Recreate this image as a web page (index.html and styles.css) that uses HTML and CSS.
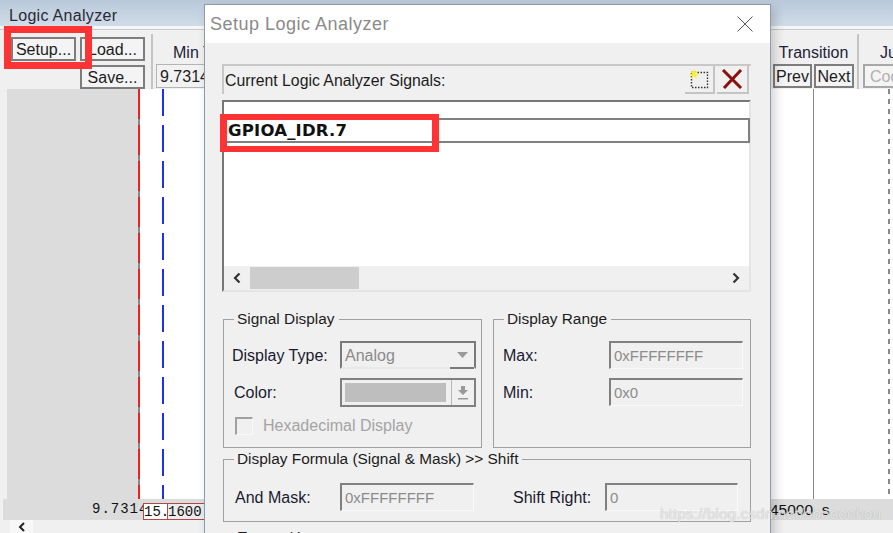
FILE: index.html
```html
<!DOCTYPE html>
<html>
<head>
    <title>Logic Analyzer</title>
    <link rel="stylesheet" href="styles.css">
</head>
<body>
    <div class="analyzer">
        <div class="analyzer-title">Logic Analyzer</div>
        <div class="toolbar">
            <div class="tool-col setup-col">
                <button class="btn btn-wide">Setup...</button>
            </div>
            <div class="tool-col load-col">
                <button class="btn btn-wide">Load...</button>
                <button class="btn btn-wide">Save...</button>
            </div>
            <div class="tool-sep"></div>
            <div class="tool-col min-col">
                <div class="tool-label min-label">Min Time</div>
                <div class="tool-value">9.731450</div>
            </div>
            <div class="tool-spacer"></div>
            <div class="tool-col">
                <div class="tool-label">Transition</div>
                <div class="tool-pair">
                    <button class="btn btn-prev">Prev</button>
                    <button class="btn btn-next">Next</button>
                </div>
            </div>
            <div class="tool-sep sep-right"></div>
            <div class="tool-col jump-col">
                <div class="tool-label">Jump</div>
                <button class="btn btn-code">Code</button>
            </div>
        </div>
        <div class="chart">
            <div class="chart-names"></div>
            <div class="chart-plot">
                <div class="cursor cursor-red"></div>
                <div class="cursor cursor-blue"></div>
                <div class="cursor cursor-grid"></div>
                <div class="cursor cursor-dash"></div>
            </div>
        </div>
        <div class="timebar">
            <span class="time-start">9.7314</span>
            <span class="time-box time-box-a">15.</span>
            <span class="time-box time-box-b">1600</span>
            <span class="time-end">45000  s</span>
        </div>
        <div class="hscroll">
            <span class="hscroll-btn">
                <svg width="8" height="10" viewBox="0 0 8 10"><path d="M6 1 L2 5 L6 9" fill="none" stroke="#222" stroke-width="2"/></svg>
            </span>
        </div>
    </div>

    <div class="dialog">
        <div class="dialog-title">
            <span>Setup Logic Analyzer</span>
            <svg class="dialog-close" width="16" height="16" viewBox="0 0 16 16"><path d="M0.5 0.5 L15.5 15.5 M15.5 0.5 L0.5 15.5" stroke="#555" stroke-width="1" fill="none"/></svg>
        </div>
        <div class="dialog-body">
            <div class="signals-head">
                <span class="signals-label">Current Logic Analyzer Signals:</span>
                <button class="icon-btn">
                    <svg width="22" height="22" viewBox="0 0 22 22">
                        <rect x="3.500" y="4.500" width="16" height="15" fill="none" stroke="#333" stroke-width="1.400" stroke-dasharray="1.500 1.500"/>
                        <path d="M6 0.500 L7 4 L10.500 2.500 L8 5.500 L11.500 7 L8 7.500 L9 11 L6 8.500 L3 11 L4 7.500 L0.500 7 L4 5.500 L1.500 2.500 L5 4 Z" fill="#f8f040"/>
                    </svg>
                </button>
                <button class="icon-btn icon-del">
                    <svg width="22" height="20" viewBox="0 0 22 20"><path d="M2 1 L20 19 M20 1 L3 19" stroke="#8b1010" stroke-width="3" fill="none"/></svg>
                </button>
            </div>
            <div class="signals-list">
                <div class="signals-rows">
                    <div class="signal-row">GPIOA_IDR.7</div>
                </div>
                <div class="list-scroll">
                    <svg width="10" height="12" viewBox="0 0 10 12"><path d="M7.500 1.500 L3 6 L7.500 10.500" fill="none" stroke="#333" stroke-width="2.200"/></svg>
                    <span class="list-thumb"></span>
                    <svg class="list-right" width="10" height="12" viewBox="0 0 10 12"><path d="M2.500 1.500 L7 6 L2.500 10.500" fill="none" stroke="#333" stroke-width="2.200"/></svg>
                </div>
            </div>

            <div class="group-row">
                <fieldset class="group group-display">
                    <legend>Signal Display</legend>
                    <div class="field">
                        <label>Display Type:</label>
                        <div class="combo">
                            <span class="combo-text">Analog</span>
                            <span class="combo-arrow"><svg width="11" height="6" viewBox="0 0 11 6"><path d="M0 0 H11 L5.500 6 Z" fill="#9a9a9a"/></svg></span>
                        </div>
                    </div>
                    <div class="field">
                        <label class="color-label">Color:</label>
                        <div class="color-combo">
                            <span class="color-swatch"></span>
                            <span class="color-arrow"><svg width="12" height="15" viewBox="0 0 12 15"><path d="M4 1 H8 V5 H11 L6 10 L1 5 H4 Z M1 13 H11 V14.500 H1 Z" fill="#999"/></svg></span>
                        </div>
                    </div>
                    <div class="check">
                        <span class="check-box"></span>
                        <span>Hexadecimal Display</span>
                    </div>
                </fieldset>
                <fieldset class="group group-range">
                    <legend>Display Range</legend>
                    <div class="field">
                        <label class="range-label">Max:</label>
                        <div class="input">0xFFFFFFFF</div>
                    </div>
                    <div class="field">
                        <label class="range-label">Min:</label>
                        <div class="input">0x0</div>
                    </div>
                </fieldset>
            </div>

            <fieldset class="group group-formula">
                <legend>Display Formula (Signal &amp; Mask) &gt;&gt; Shift</legend>
                <div class="field field-formula">
                    <label class="mask-label">And Mask:</label>
                    <div class="input">0xFFFFFFFF</div>
                    <label class="shift-label">Shift Right:</label>
                    <div class="input input-shift">0</div>
                </div>
            </fieldset>

            <div class="export-label">Export / Import</div>
        </div>
    </div>

    <div class="mark mark-setup"></div>
    <div class="mark mark-signal"></div>
    <div class="watermark">https://blog.csdn.net/oooooohou</div>
</body>
</html>
```

FILE: styles.css
```css
html, body {
    margin: 0;
    height: 533px;
    overflow: hidden;
}
body {
    position: relative;
    background: #f0f0f0;
    color: #1c1c1c;
    font-family: "Liberation Sans", Arial, sans-serif;
    font-size: 16px;
}
button {
    font: inherit;
    color: inherit;
    padding: 0;
}

/* analyzer window behind the dialog */
.analyzer {
    height: 533px;
    display: flex;
    flex-direction: column;
}
.analyzer-title {
    height: 26px;
    line-height: 31px;
    padding-left: 9px;
    letter-spacing: 0.3px;
    color: #2a2a35;
    background: linear-gradient(#b9c9da, #d0dce8);
    border-bottom: 3px solid #f4f6f8;
}
.toolbar {
    height: 60px;
    display: flex;
    box-sizing: border-box;
    border-top: 1px solid #c8c8c8;
    padding: 7px 0 0 11px;
    background: #f0f0f0;
}
.tool-col {
    display: flex;
    flex-direction: column;
    align-items: center;
    gap: 4px;
}
.setup-col { margin-right: 4px; }
.load-col { margin-right: 6px; }
.tool-sep {
    width: 2px;
    height: 56px;
    margin-top: -3px;
    background: #c4c4c4;
}
.min-col {
    width: 92px;
    margin-left: 3px;
    align-items: flex-start;
}
.tool-label {
    height: 23px;
    line-height: 32px;
    white-space: nowrap;
    color: #222238;
}
.min-label { padding-left: 17px; }
.tool-value {
    width: 100%;
    height: 24px;
    line-height: 23px;
    box-sizing: border-box;
    padding-left: 3px;
    border: 1px solid #b4b4b4;
    background: #f2f2f2;
    white-space: nowrap;
}
.tool-spacer { flex: 1; }
.tool-pair {
    display: flex;
    gap: 2px;
}
.btn {
    height: 24px;
    box-sizing: border-box;
    border: 2px solid #7d7d7d;
    background: #f4f4f4;
    line-height: 21px;
    text-align: center;
}
.btn-wide { width: 65px; }
.btn-prev { width: 39px; }
.btn-next { width: 40px; }
.sep-right { margin-left: 3px; }
.jump-col {
    width: 30px;
    margin-left: 4px;
    align-items: flex-start;
}
.jump-col .tool-label { padding-left: 17px; }
.btn-code {
    width: 60px;
    flex: none;
    border-color: #a8a8a8;
    color: #b0b0b0;
    text-align: left;
    padding-left: 5px;
}
.chart {
    flex: 1;
    display: flex;
    margin-left: 7px;
    background: #fff;
}
.chart-names {
    width: 131px;
    background: #dcdcdc;
}
.chart-plot {
    flex: 1;
    position: relative;
}
.cursor {
    position: absolute;
    top: 0;
    bottom: 0;
}
.cursor-red {
    left: 0;
    width: 2px;
    background: repeating-linear-gradient(#f02020 0 30px, #888 30px 36px);
}
.cursor-blue {
    left: 24px;
    width: 2px;
    background: repeating-linear-gradient(#2030e8 0 27px, #fff 27px 36px);
}
.cursor-grid {
    left: 675px;
    width: 1px;
    background: #888;
}
.cursor-dash {
    left: 750px;
    width: 2px;
    background: repeating-linear-gradient(#888 0 5px, #fff 5px 10px);
}
.timebar {
    height: 21px;
    flex: none;
    position: relative;
    margin-left: 3px;
    background: #dcdcdc;
    font-family: "Liberation Mono", monospace;
    font-size: 14px;
    color: #111;
}
.time-start {
    position: absolute;
    left: 89px;
    top: 2px;
    letter-spacing: 1px;
}
.time-box {
    position: absolute;
    top: 4px;
    height: 17px;
    line-height: 17px;
    box-sizing: border-box;
    background: #fff;
    border: 1px solid #b04848;
    white-space: nowrap;
}
.time-box-a {
    left: 140px;
    width: 25px;
}
.time-box-b {
    left: 164px;
    width: 50px;
    background: #ececec;
}
.time-end {
    position: absolute;
    left: 767px;
    top: 2px;
    font-family: "Liberation Sans", Arial, sans-serif;
    font-size: 15.500px;
    white-space: pre;
}
.hscroll {
    height: 13px;
    flex: none;
    padding-left: 10px;
    background: #f0f0f0;
}
.hscroll-btn {
    display: flex;
    align-items: center;
    justify-content: center;
    width: 23px;
    height: 13px;
    background: #f8f8f8;
}

/* dialog */
.dialog {
    position: absolute;
    left: 204px;
    top: 4px;
    width: 567px;
    height: 540px;
    box-sizing: border-box;
    border: 1px solid #8e9aa6;
    background: #f0f0f0;
    box-shadow: 4px 4px 10px rgba(0, 0, 0, 0.18);
}
.dialog-title {
    height: 38px;
    display: flex;
    align-items: center;
    justify-content: space-between;
    padding: 0 17px 0 5px;
    background: #fff;
    font-size: 18px;
    letter-spacing: 0.5px;
    color: #8a8a8a;
}
.dialog-body {
    padding: 21px 19px 0 17px;
    display: flex;
    flex-direction: column;
}
.signals-head {
    height: 30px;
    display: flex;
    align-items: center;
    box-sizing: border-box;
    border-top: 2px solid #c8c8c8;
    border-left: 2px solid #c8c8c8;
    padding: 0 2px 0 1px;
}
.signals-label {
    flex: 1;
    font-size: 15.800px;
    padding-top: 2px;
}
.icon-btn {
    width: 30px;
    height: 28px;
    margin-left: 2px;
    display: flex;
    align-items: center;
    justify-content: center;
    border: none;
    border-right: 2px solid #c4c4c4;
    border-bottom: 2px solid #c4c4c4;
    background: #f0f0f0;
}
.icon-del { width: 32px; }
.signals-list {
    height: 192px;
    margin-top: 6px;
    display: flex;
    flex-direction: column;
    box-sizing: border-box;
    border-top: 2px solid #777;
    border-left: 2px solid #777;
    border-right: 2px solid #e4e4e4;
    border-bottom: 2px solid #e4e4e4;
    background: #fff;
}
.signals-rows {
    flex: 1;
    padding-top: 16px;
}
.signal-row {
    height: 25px;
    line-height: 21px;
    box-sizing: border-box;
    border: 2px solid #808080;
    padding-left: 2px;
    font-family: "DejaVu Sans", sans-serif;
    font-size: 16.500px;
    font-weight: bold;
    letter-spacing: 0.2px;
    color: #111;
    margin-right: -1px;
}
.list-scroll {
    height: 24px;
    display: flex;
    align-items: center;
    padding: 0 8px;
    background: #f0f0f0;
}
.list-thumb {
    width: 109px;
    height: 22px;
    margin-left: 8px;
    background: #cdcdcd;
}
.list-right { margin-left: auto; }

.group-row {
    display: flex;
    gap: 11px;
    margin: 18px 0 0 1px;
}
.group {
    margin: 0;
    padding: 0;
    box-sizing: border-box;
    border: 1px solid #a0a0a0;
}
.group legend {
    margin-left: 2px;
    padding: 0 4px 0 3px;
    font-size: 15.400px;
    line-height: 18px;
}
.group-display {
    width: 259px;
    height: 138px;
    padding: 13px 5px 0 8px;
}
.group-range {
    width: 258px;
    height: 138px;
    padding: 13px 6px 0 9px;
}
.group-range legend { margin-left: 1px; }
.group-formula {
    width: 528px;
    height: 72px;
    margin: 2px 0 0 1px;
    padding: 15px 0 0 11px;
}
.group-formula legend { margin-left: -1px; }
.field {
    display: flex;
    align-items: center;
    height: 28px;
    margin-bottom: 9px;
}
.field label {
    width: 108px;
    flex: none;
    padding-top: 2px;
    color: #1a1a30;
}
.field .color-label { padding-left: 2px; box-sizing: border-box; }
.field .range-label { width: 106px; }
.combo, .color-combo {
    width: 136px;
    height: 28px;
    display: flex;
    box-sizing: border-box;
    border: 2px solid #7a7a7a;
    background: #f0f0f0;
}
.combo { border-bottom-color: #e8e8e8; }
.combo-text {
    flex: 1;
    padding-left: 3px;
    line-height: 26px;
    color: #8a8a8a;
}
.combo-arrow {
    width: 24px;
    display: flex;
    align-items: center;
    justify-content: center;
    border-bottom: 2px solid #7a7a7a;
    margin-bottom: -2px;
}
.color-combo {
    padding: 3px 0 3px 3px;
    border-color: #808080;
    height: 29px;
}
.color-swatch {
    flex: 1;
    background: #bebebe;
    margin-right: 5px;
}
.color-arrow {
    width: 22px;
    margin: -3px 0;
    display: flex;
    align-items: center;
    justify-content: center;
    border-left: 1px solid #b8b8b8;
}
.check {
    display: flex;
    align-items: center;
    gap: 10px;
    margin: 11px 0 0 3px;
    color: #a4a4a4;
}
.check-box {
    width: 18px;
    height: 18px;
    box-sizing: border-box;
    border-top: 2px solid #a0a0a0;
    border-left: 2px solid #a0a0a0;
    border-right: 1px solid #fafafa;
    border-bottom: 1px solid #fafafa;
}
.input {
    width: 134px;
    height: 28px;
    flex: none;
    line-height: 26px;
    box-sizing: border-box;
    padding-left: 3px;
    border-top: 2px solid #808080;
    border-left: 2px solid #808080;
    border-right: 1px solid #fafafa;
    border-bottom: 1px solid #fafafa;
    font-size: 15px;
    color: #8c8c8c;
}
.input-shift { width: 133px; }
.field-formula { margin-bottom: 0; }
.field .mask-label { width: 105px; }
.field .shift-label {
    width: 92px;
    margin-left: 39px;
}
.export-label {
    margin: 8px 0 0 15px;
}

/* annotations over the screenshot */
.mark {
    position: absolute;
    box-sizing: border-box;
    border: 7px solid #ff3333;
}
.mark-setup {
    left: 4px;
    top: 26px;
    width: 88px;
    height: 43px;
}
.mark-signal {
    left: 220px;
    top: 114px;
    width: 219px;
    height: 38px;
    border-width: 6px 7px;
}
.watermark {
    position: absolute;
    left: 660px;
    top: 505px;
    font-size: 15px;
    letter-spacing: 0.25px;
    color: rgba(255, 255, 255, 0.7);
    text-shadow: 0 0 1px rgba(130, 130, 130, 0.7);
    white-space: nowrap;
}
```
